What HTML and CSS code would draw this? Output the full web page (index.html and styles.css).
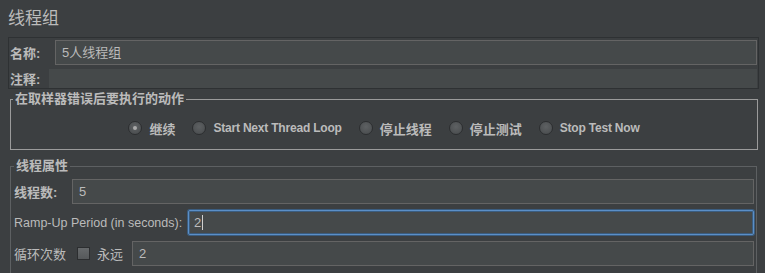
FILE: index.html
```html
<!DOCTYPE html>
<html>
<head>
<meta charset="utf-8">
<link rel="stylesheet" href="styles.css">
</head>
<body>
<div class="title">线程组</div>
<div class="namebox">
  <div class="row name-row">
    <span class="lbl bold name-lbl">名称:</span>
    <div class="field name-field">5人线程组</div>
  </div>
  <div class="row comment-row">
    <span class="lbl bold comment-lbl">注释:</span>
    <div class="textarea"></div>
  </div>
</div>
<fieldset class="group group-action">
  <legend>在取样器错误后要执行的动作</legend>
  <div class="radios">
    <label class="radio-item"><span class="radio checked"></span><span class="rtext">继续</span></label>
    <label class="radio-item"><span class="radio"></span><span class="rtext latin">Start Next Thread Loop</span></label>
    <label class="radio-item"><span class="radio"></span><span class="rtext">停止线程</span></label>
    <label class="radio-item"><span class="radio"></span><span class="rtext">停止测试</span></label>
    <label class="radio-item"><span class="radio"></span><span class="rtext latin">Stop Test Now</span></label>
  </div>
</fieldset>
<fieldset class="group group-props">
  <legend>线程属性</legend>
  <div class="prow">
    <span class="lbl bold">线程数:</span>
    <div class="field">5</div>
  </div>
  <div class="prow">
    <span class="lbl latin-reg">Ramp-Up Period (in seconds):</span>
    <div class="field focused">2<span class="caret"></span></div>
  </div>
  <div class="prow">
    <span class="lbl">循环次数</span>
    <span class="checkbox"></span>
    <span class="lbl forever">永远</span>
    <div class="field">2</div>
  </div>
</fieldset>
</body>
</html>
```
FILE: styles.css
```css
* { box-sizing: border-box; }
html, body {
  margin: 0;
  padding: 0;
  background: #3c3f41;
  width: 765px;
  height: 273px;
  overflow: hidden;
}
body {
  font-family: "Liberation Sans", "Noto Sans CJK SC", sans-serif;
  color: #bbbbbb;
  font-size: 13px;
}
.title {
  height: 37px;
  padding: 9px 0 0 8px;
  font-size: 17px;
  line-height: 20px;
}
.namebox {
  margin: 0 6px 0 8px;
  border: 1px solid #2e3133;
  padding: 2px 1px 0 1px;
}
.row {
  display: flex;
  align-items: center;
}
.lbl {
  font-size: 13px;
  white-space: nowrap;
  flex-shrink: 0;
}
.bold { font-weight: bold; }
.name-lbl { width: 45px; }
.comment-lbl { width: 39px; }
.field {
  flex: 1;
  min-width: 0;
  height: 25px;
  background: #45494a;
  border: 1px solid #646464;
  padding: 0 6px;
  font-size: 13px;
  line-height: 23px;
  display: flex;
  align-items: center;
}
.comment-row { margin-top: 4px; }
.textarea {
  flex: 1;
  height: 19px;
  background: #45494a;
}
.group {
  margin: 2px 7px 0 10px;
  padding: 0 2px 0 2px;
  border: 1px solid #9b9b9b;
  min-width: 0;
}
.group legend {
  padding: 0 2px;
  font-weight: bold;
  font-size: 13px;
  line-height: 16px;
}
.radios {
  display: flex;
  justify-content: center;
  align-items: center;
  gap: 17px;
  height: 20px;
  margin: 11px 0 11px;
}
.radio-item {
  display: flex;
  align-items: center;
  gap: 7px;
}
.rtext {
  font-weight: bold;
  font-size: 13px;
}
.rtext.latin {
  font-size: 12px;
  letter-spacing: -0.2px;
}
.radio {
  width: 14px;
  height: 14px;
  border-radius: 50%;
  border: 1px solid #2c2e30;
  background: radial-gradient(circle at 50% 40%, #5e6163 0%, #505355 60%, #46494b 100%);
  position: relative;
}
.radio.checked::after {
  content: "";
  position: absolute;
  left: 4px;
  top: 4px;
  width: 4px;
  height: 4px;
  border-radius: 50%;
  background: #a9a9a9;
}
.group-props {
  margin: 8px 8px 0 10px;
  border-color: #5d6062;
  padding: 5px 2px 10px 3px;
}
.prow {
  display: flex;
  align-items: center;
  margin-bottom: 6px;
}
.prow .lbl.bold { width: 58px; }
.prow .lbl.latin-reg { width: 174px; font-size: 12.5px; }
.checkbox {
  flex-shrink: 0;
  width: 13px;
  height: 13px;
  margin: 0 7px 0 11px;
  border: 1px solid #2c2e30;
  background: linear-gradient(#66696b, #56595b);
}
.forever { margin-right: 9px; }
.field.focused {
  border: 1px solid #5b8fc7;
  box-shadow: 0 0 0 1px #3b5d80, inset 0 0 0 1px #3b5d80;
  border-radius: 2px;
  padding-left: 5px;
}
.caret {
  display: inline-block;
  width: 1px;
  height: 15px;
  background: #d0d0d0;
  margin-left: 1px;
}
```
